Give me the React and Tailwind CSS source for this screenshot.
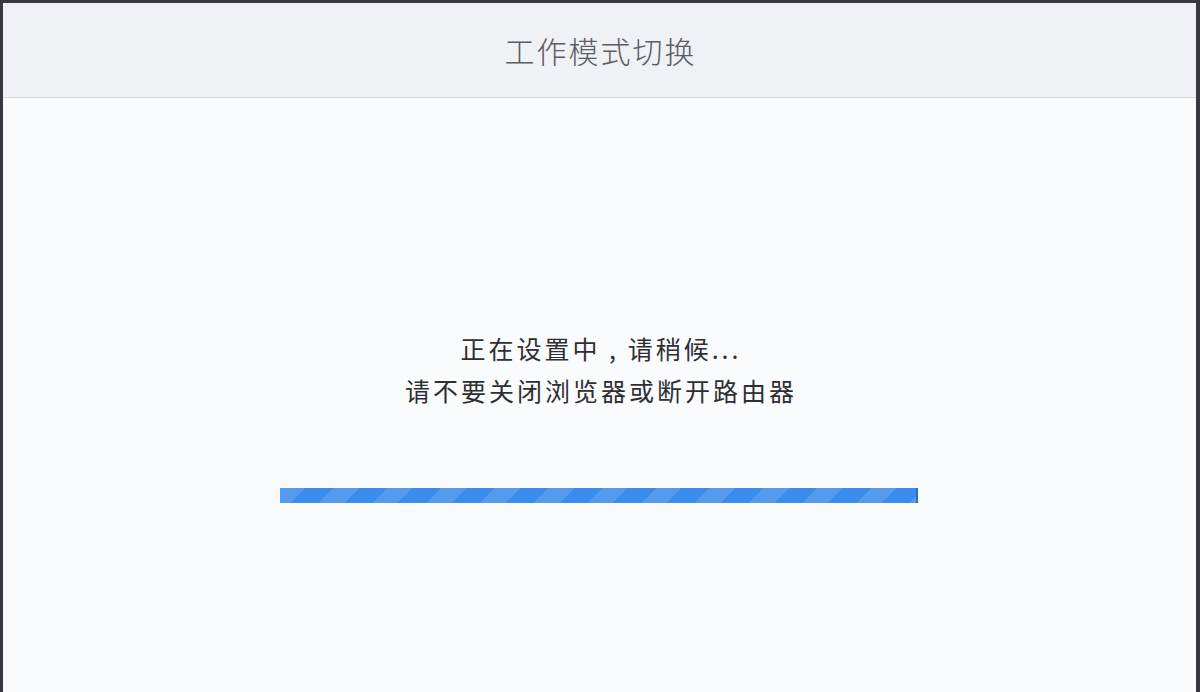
import React from "react";

const font = { fontFamily: '"Noto Sans CJK SC", "Noto Sans", sans-serif' };

function ProgressBar() {
  return (
    <div className="w-[638px] h-[15px] bg-[#3b8cec] bg-[repeating-linear-gradient(135deg,rgba(255,255,255,0.13)_0px,rgba(255,255,255,0.13)_18px,transparent_18px,transparent_38px)] border-r-2 border-[#2f6fbf]" />
  );
}

export default function App() {
  return (
    <div
      className="w-[1200px] h-[692px] bg-[#3a3640] pt-[3px] pl-[3px] pr-[4px] flex flex-col"
      style={font}
    >
      <div className="flex-1 flex flex-col bg-[#fafbfd]">
        {/* Header */}
        <div className="h-[95px] bg-[#f0f1f4] border-b border-[#d7d9de] flex items-center justify-center">
          <h1 className="text-[30px] text-[#5c5c64] font-light tracking-[2px] pl-[2px]">工作模式切换</h1>
        </div>

        {/* Body */}
        <div className="flex-1 flex flex-col items-center">
          <div className="mt-[229px] flex flex-col items-center text-[25px] leading-[42px] tracking-[3px] pl-[3px] text-[#2f2f33]">
            <p className="whitespace-pre">正在设置中 , 请稍候...</p>
            <p>请不要关闭浏览器或断开路由器</p>
          </div>
          <div className="mt-[77px] w-full pl-[277px]">
            <ProgressBar />
          </div>
        </div>
      </div>
    </div>
  );
}
